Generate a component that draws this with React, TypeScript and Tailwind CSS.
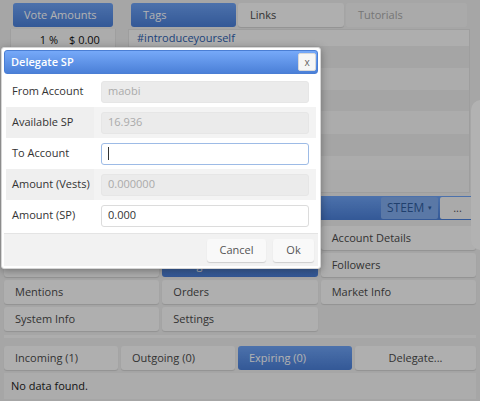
import React from 'react';

const menu = [
  ['', '', 'Account Details'],
  ['', 'Delegations', 'Followers'],
  ['Mentions', 'Orders', 'Market Info'],
  ['System Info', 'Settings', ''],
];

const rows = [
  { label: 'From Account', value: 'maobi', disabled: true },
  { label: 'Available SP', value: '16.936', disabled: true },
  { label: 'To Account', value: '', disabled: false, focus: true },
  { label: 'Amount (Vests)', value: '0.000000', disabled: true },
  { label: 'Amount (SP)', value: '0.000', disabled: false },
];

const btn = 'h-[24px] rounded-[3px] bg-[#fbfbfb] shadow-[0_1px_1px_rgba(0,0,0,0.12)] flex items-center text-[#4a4a4a]';
const blue = 'bg-gradient-to-b from-[#6ea3f6] to-[#4a7fd8] text-white';

export default function App() {
  return (
    <div className="relative w-[480px] h-[401px] overflow-hidden bg-[#eeeeee] text-[11px] text-[#333] font-['Open_Sans',sans-serif]">
      {/* page */}
      <div className="flex flex-col pt-[3px]">
        <div className="flex h-[190px]">
          <div className="w-[128px] flex flex-col pl-[10px] pr-[12px]">
            <div className={`h-[24px] mx-[3px] rounded-[3px] flex items-center pl-[11px] ${blue}`}>Vote Amounts</div>
            <div className="mt-[2px] flex-1 bg-[#f7f7f7] border-x border-[#e4e4e4]">
              <div className="h-[22px] flex items-center text-[#111]">
                <span className="w-[47px] text-right font-medium">1 %</span>
                <span className="ml-[11px]">$ 0.00</span>
              </div>
            </div>
          </div>
          <div className="flex-1 flex flex-col pr-[10px]">
            <div className="flex gap-[2px] pl-[3px] pr-[3px]">
              <div className={`w-[105px] h-[24px] rounded-[3px] flex items-center pl-[12px] ${blue}`}>Tags</div>
              <div className={`w-[106px] pl-[12px] ${btn}`}>Links</div>
              <div className="flex-1 h-[24px] rounded-[3px] bg-[#f4f4f4] text-[#aaa] flex items-center pl-[12px]">Tutorials</div>
            </div>
            <div className="mt-[2px] flex-1 bg-[#f4f4f4] border border-[#e2e2e2] flex flex-col">
              <div className="h-[16px] flex items-center pl-[8px] text-[#2d5fb0] bg-[#f9f9f9]">#introduceyourself</div>
              <div className="h-[22px] bg-[#ececec]" />
              <div className="h-[22px] bg-[#f7f7f7]" />
              <div className="h-[21px] bg-[#ececec]" />
              <div className="h-[23px] bg-[#f7f7f7]" />
              <div className="h-[22px] bg-[#ececec]" />
              <div className="h-[14px] bg-[#f7f7f7]" />
            </div>
          </div>
        </div>
        <div className={`mx-[4px] mt-[3px] h-[24px] rounded-[3px] flex items-center justify-end gap-[2px] pr-[1px] ${blue}`}>
          <div className="w-[57px] h-[22px] rounded-[2px] bg-[#82acee] text-[#2f5c9e] text-[12px] flex items-center pl-[6px]">
            STEEM<span className="ml-auto mr-[6px] text-[7px]">▾</span>
          </div>
          <div className="w-[35px] h-[22px] rounded-[2px] bg-[#f4f4f4] text-[#555] flex items-center justify-center">...</div>
        </div>
        <div className="mx-[4px] mt-[6px] grid grid-cols-3 gap-x-[3px] gap-y-[3px] pb-[4px] border-b-[3px] border-[#f8f8f8]">
          {menu.flat().map((t, i) =>
            t === 'Delegations' ? (
              <div key={i} className={`h-[24px] rounded-[3px] flex items-center pl-[11px] ${blue}`}>{t}</div>
            ) : t ? (
              <div key={i} className={`${btn} pl-[11px]`}>{t}</div>
            ) : (
              <div key={i} className={i === 11 ? '' : `${btn}`} />
            )
          )}
        </div>
        <div className="mx-[4px] mt-[8px] flex gap-[3px]">
          <div className={`${btn} w-[114px] pl-[11px]`}>Incoming (1)</div>
          <div className={`${btn} w-[114px] pl-[11px]`}>Outgoing (0)</div>
          <div className={`w-[114px] h-[24px] rounded-[3px] flex items-center pl-[11px] ${blue}`}>Expiring (0)</div>
          <div className={`${btn} flex-1 justify-center bg-[#f2f2f2]`}>Delegate...</div>
        </div>
        <div className="mx-[4px] mt-[3px] h-[26px] bg-[#f6f6f6] flex items-center pl-[7px] text-[#222]">No data found.</div>
      </div>

      {/* edge of panel on right */}
      <div className="absolute left-[471px] top-[100px] w-[20px] h-[150px] rounded-[10px] bg-white" />

      {/* overlay */}
      <div className="absolute inset-0 bg-black/30" />

      {/* dialog */}
      <div className="absolute left-[1px] top-[47px] w-[320px] h-[222px] bg-white border border-[#d6d6d6] rounded-[3px] shadow-[0_2px_8px_rgba(0,0,0,0.35)] p-[2px] flex flex-col">
        <div className="h-[24px] rounded-[3px] bg-gradient-to-b from-[#76a9f9] to-[#4b80d8] border border-[#4a7ed4] flex items-center pl-[6px] pr-[1px]">
          <span className="text-white font-semibold text-[11px]">Delegate SP</span>
          <div className="ml-auto w-[18px] h-[18px] rounded-[2px] bg-[#f6f6f6] border border-[#d8d8d8] flex items-center justify-center text-[#666] text-[10px]">x</div>
        </div>
        <div className="mt-[2px] px-[2px] flex flex-col">
          {rows.map((r, i) => (
            <div key={r.label} className={`h-[31px] flex items-center ${i % 2 === 1 ? 'bg-[#f3f3f3]' : 'bg-white'}`}>
              <div className={`w-[88px] h-full flex items-center pl-[6px] whitespace-nowrap text-[#333] ${i % 2 === 1 ? 'bg-[#efefef]' : ''}`}>{r.label}</div>
              <div className="flex-1 pl-[7px] pr-[7px]">
                <div
                  className={`h-[22px] rounded-[3px] border flex items-center pl-[6px] text-[11px] ${
                    r.disabled
                      ? 'bg-[#ebebeb] border-[#e6e6e6] text-[#aaa]'
                      : r.focus
                      ? 'bg-white border-[#9dbbe6] text-[#333]'
                      : 'bg-white border-[#dcdcdc] text-[#333]'
                  }`}
                >
                  {r.focus ? <span className="w-px h-[13px] bg-[#333]" /> : r.value}
                </div>
              </div>
            </div>
          ))}
        </div>
        <div className="mt-[2px] flex-1 bg-[#f2f2f2] border-t border-[#e4e4e4] flex items-center justify-end gap-[7px] pr-[4px]">
          <div className="w-[59px] h-[23px] rounded-[3px] bg-[#f9f9f9] shadow-[0_1px_1px_rgba(0,0,0,0.15)] flex items-center justify-center text-[#555]">Cancel</div>
          <div className="w-[41px] h-[23px] rounded-[3px] bg-[#f9f9f9] shadow-[0_1px_1px_rgba(0,0,0,0.15)] flex items-center justify-center text-[#555]">Ok</div>
        </div>
      </div>
    </div>
  );
}
